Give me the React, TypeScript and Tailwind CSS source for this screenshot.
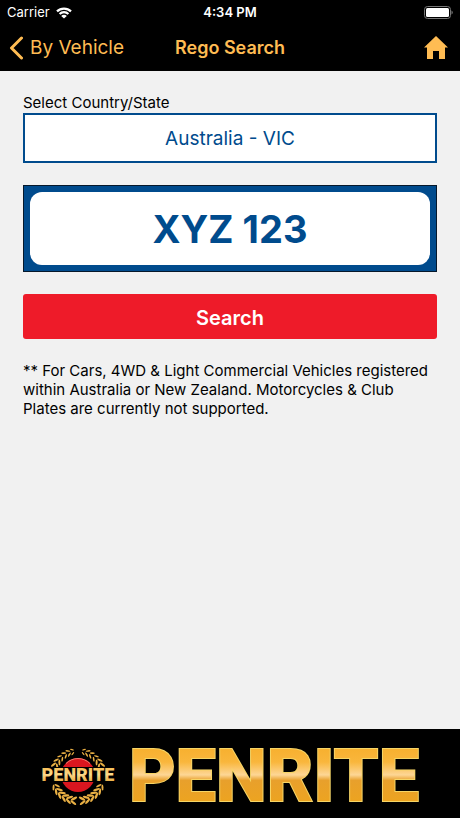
import React, { useState } from "react";

const REGIONS = [
  "Australia - VIC",
  "Australia - NSW",
  "Australia - QLD",
  "Australia - SA",
  "Australia - WA",
  "Australia - TAS",
  "Australia - NT",
  "Australia - ACT",
  "New Zealand",
];

// Degrees from the bottom of the wreath, going up its left side.
const LEAVES = [
  { angle: 10, size: 7 },
  { angle: 21, size: 7 },
  { angle: 32, size: 7 },
  { angle: 43, size: 7 },
  { angle: 54, size: 7 },
  { angle: 65, size: 6 },
  { angle: 115, size: 6 },
  { angle: 126, size: 6 },
  { angle: 137, size: 5 },
  { angle: 148, size: 5 },
  { angle: 158, size: 5 },
  { angle: 167, size: 4 },
];

function StatusBar() {
  return (
    <div className="flex h-6 items-center px-[7px] pt-px text-[13px] text-white">
      <div className="flex flex-1 items-center gap-[6px]">
        <span>Carrier</span>
        <svg viewBox="0 0 16 12" className="h-3 w-4" fill="none" stroke="currentColor">
          <path d="M1 4.4a10 10 0 0 1 14 0" strokeWidth="2.2" />
          <path d="M3.6 7a6.2 6.2 0 0 1 8.8 0" strokeWidth="2.2" />
          <path d="M8 11.6 5.2 8.9a3.9 3.9 0 0 1 5.6 0Z" fill="currentColor" stroke="none" />
        </svg>
      </div>
      <span className="font-semibold">4:34 PM</span>
      <div className="flex flex-1 justify-end">
        <svg viewBox="0 0 29 13" className="h-[13px] w-[29px]">
          <rect x="0.5" y="0.5" width="26" height="12" rx="3" fill="none" stroke="#777" />
          <rect x="2" y="2" width="23" height="9" rx="1.5" fill="#fff" />
          <path d="M27.5 4.5a2.2 2.2 0 0 1 0 4Z" fill="#777" />
        </svg>
      </div>
    </div>
  );
}

function Header() {
  return (
    <header className="bg-black text-[#ffbc53]">
      <StatusBar />
      <nav className="grid h-[47px] grid-cols-[1fr_auto_1fr] items-center px-[9px]">
        <a href="#vehicle" className="flex items-center gap-[7px] text-[19px] leading-[30px]">
          <svg viewBox="0 0 14 24" className="h-6 w-[14px]" fill="none" stroke="currentColor">
            <path d="M12.5 2 2.5 12l10 10" strokeWidth="3" strokeLinecap="round" strokeLinejoin="round" />
          </svg>
          By Vehicle
        </a>
        <h1 className="text-[18px] font-semibold">Rego Search</h1>
        <a href="#home" aria-label="Home" className="justify-self-end pr-[3px]">
          <svg viewBox="0 0 24 24" className="size-6" fill="currentColor">
            <path d="M12 0 24 11.5h-3V23h-6v-8H9v8H3V11.5H0Z" />
          </svg>
        </a>
      </nav>
    </header>
  );
}

function LaurelBranch() {
  return (
    <>
      {LEAVES.map(({ angle, size }) => (
        <g key={angle} transform={`rotate(${angle} 38 30)`}>
          <ellipse cx="38" cy="53" rx={size / 2} ry={size / 6} transform="rotate(-38 38 53)" />
          <ellipse cx="38" cy="57" rx={size / 2} ry={size / 6} transform="rotate(28 38 57)" />
        </g>
      ))}
    </>
  );
}

function Emblem() {
  return (
    <svg viewBox="0 0 76 60" className="h-[60px] w-[76px]" role="img" aria-label="Penrite emblem">
      <defs>
        <linearGradient id="emblem-gold" x1="0" y1="0" x2="0" y2="1">
          <stop offset="0" stopColor="#f8b43a" />
          <stop offset="0.5" stopColor="#fbd88a" />
          <stop offset="1" stopColor="#e39a20" />
        </linearGradient>
      </defs>
      <circle cx="38" cy="29" r="17" fill="#d9161f" />
      <path d="M26 17.5a17 17 0 0 1 24 0" fill="none" stroke="#f08070" strokeWidth="1" />
      <g fill="#e9b044">
        <LaurelBranch />
        <g transform="translate(76 0) scale(-1 1)">
          <LaurelBranch />
        </g>
      </g>
      <rect x="0" y="21" width="76" height="15" fill="#000" />
      <text
        x="38"
        y="35"
        textAnchor="middle"
        fill="url(#emblem-gold)"
        className="font-[Roboto,sans-serif] text-[18px] font-black"
      >
        PENRITE
      </text>
    </svg>
  );
}

function Wordmark() {
  return (
    <svg viewBox="0 0 292 84" className="h-[84px] w-[292px] overflow-visible" role="img" aria-label="Penrite">
      <defs>
        <linearGradient id="word-gold" gradientUnits="userSpaceOnUse" x1="0" y1="14" x2="0" y2="70">
          <stop offset="0" stopColor="#f7b02f" />
          <stop offset="0.25" stopColor="#f9b63c" />
          <stop offset="0.48" stopColor="#fdd695" />
          <stop offset="0.58" stopColor="#e8a02c" />
          <stop offset="1" stopColor="#eda41f" />
        </linearGradient>
      </defs>
      <text
        x="146"
        y="67"
        textAnchor="middle"
        fill="url(#word-gold)"
        stroke="#f6d566"
        strokeWidth="2"
        paintOrder="stroke"
        className="font-[Roboto,sans-serif] text-[72px] font-extrabold"
      >
        PENRITE
      </text>
    </svg>
  );
}

export default function App() {
  const [region, setRegion] = useState(REGIONS[0]);
  const [plate, setPlate] = useState("XYZ 123");

  return (
    <div className="flex min-h-screen flex-col bg-[#f1f1f1] font-[Inter,sans-serif] text-black">
      <Header />

      <main className="flex-1 px-[23px] pt-[22px]">
        <form onSubmit={(e) => e.preventDefault()}>
          <label htmlFor="region" className="block text-[15px] leading-5">
            Select Country/State
          </label>
          <select
            id="region"
            value={region}
            onChange={(e) => setRegion(e.target.value)}
            className="block h-[50px] w-full appearance-none border-2 border-[#004b8d] bg-white pt-[2px] text-center text-[19px] text-[#004b8d] [text-align-last:center]"
          >
            {REGIONS.map((name) => (
              <option key={name}>{name}</option>
            ))}
          </select>

          <div className="mt-[22px] border border-[#06182b] bg-[#004b8d] p-[6px]">
            <input
              type="text"
              aria-label="Registration number"
              value={plate}
              onChange={(e) => setPlate(e.target.value)}
              className="block h-[73px] w-full rounded-xl bg-white text-center text-[38px] font-bold text-[#004b8d]"
            />
          </div>

          <button
            type="submit"
            className="mt-[22px] block h-[45px] w-full rounded-[3px] bg-[#ee1b29] pt-[3px] text-[20px] font-semibold text-white"
          >
            Search
          </button>
        </form>

        <p className="mt-[22px] text-[15px] leading-[19px]">
          ** For Cars, 4WD &amp; Light Commercial Vehicles registered within
          Australia or New Zealand. Motorcycles &amp; Club Plates are currently
          not supported.
        </p>
      </main>

      <footer className="flex h-[89px] items-center justify-center gap-3 bg-black pt-1">
        <Emblem />
        <Wordmark />
      </footer>
    </div>
  );
}
